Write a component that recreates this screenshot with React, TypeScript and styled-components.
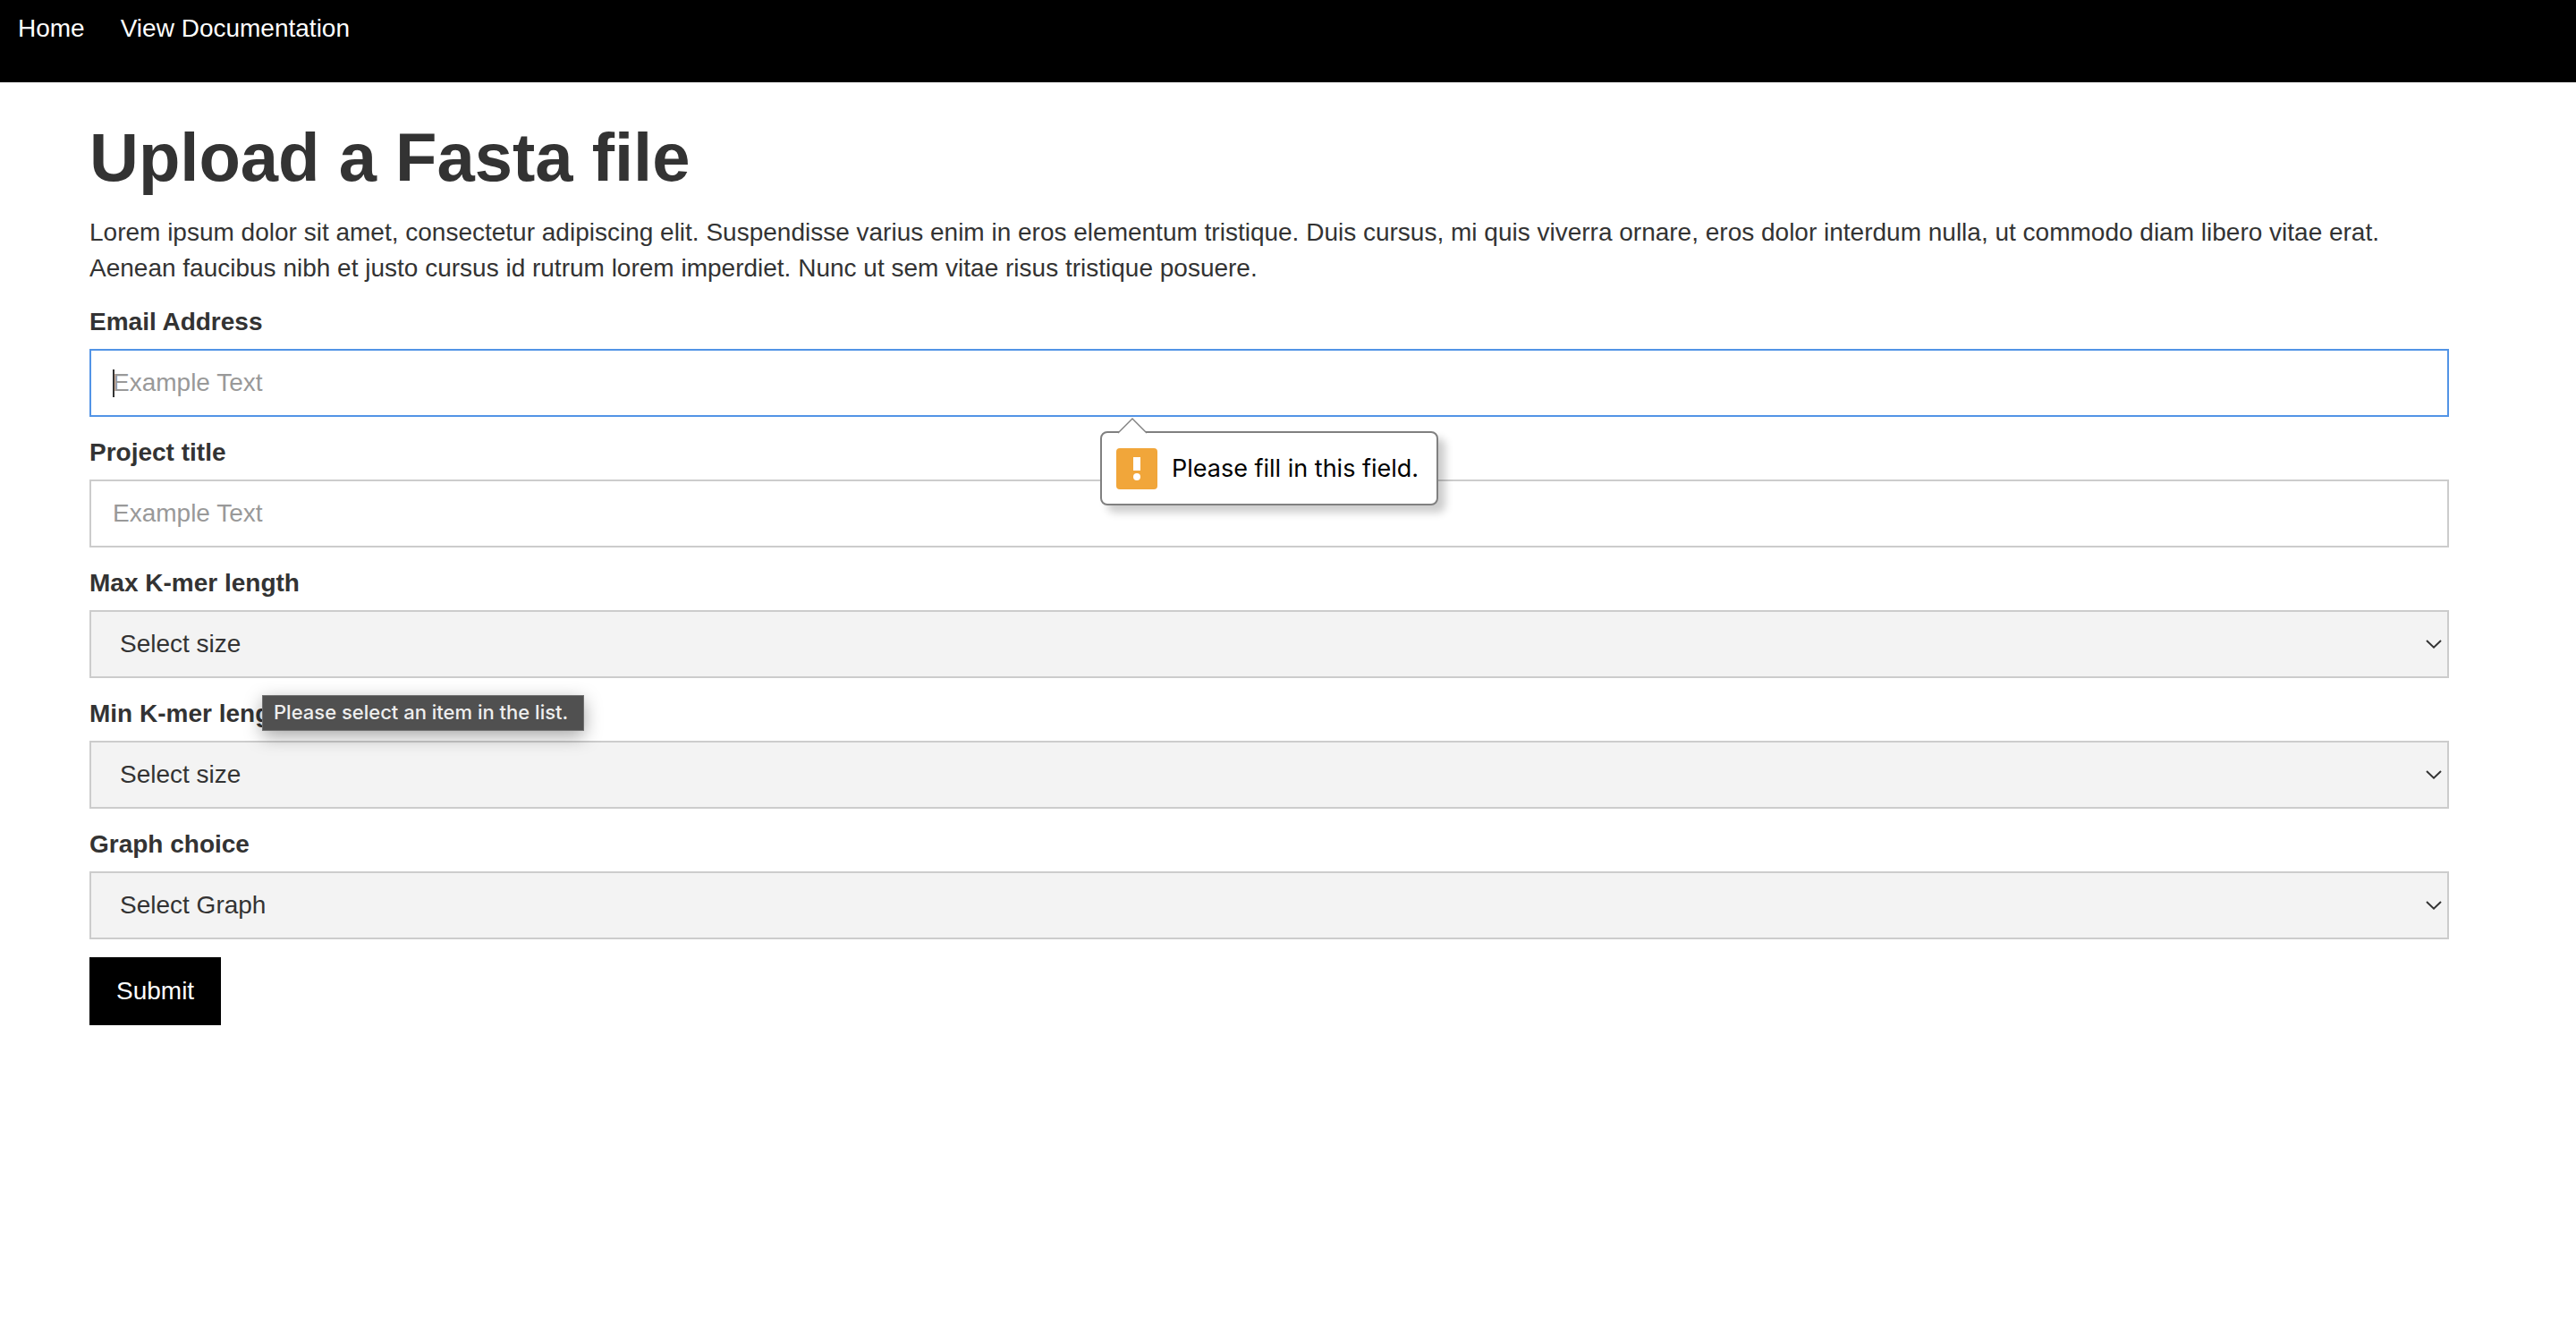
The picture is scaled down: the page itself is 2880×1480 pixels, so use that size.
import React from "react";
import styled, { createGlobalStyle, css } from "styled-components";

const GlobalStyle = createGlobalStyle`
  *, *::before, *::after { box-sizing: border-box; }
  body {
    margin: 0;
    background: #fff;
    color: #333;
    font-family: Arial, "Liberation Sans", sans-serif;
    font-size: 28px;
    line-height: 40px;
  }
`;

const NavBar = styled.nav`
  display: flex;
  gap: 40px;
  padding: 12px 20px 40px;
  background: #000;
`;

const NavLink = styled.a`
  color: #fff;
  text-decoration: none;
`;

const Page = styled.main`
  padding: 40px 142px 40px 100px;
`;

const Title = styled.h1`
  margin: 0 0 20px;
  font-size: 76px;
  line-height: 88px;
  font-weight: 700;
`;

const Intro = styled.p`
  margin: 0 0 20px;
`;

const Form = styled.form`
  display: flex;
  flex-direction: column;
  align-items: stretch;
  gap: 20px;
`;

const Field = styled.div`
  display: flex;
  flex-direction: column;
  gap: 10px;
`;

const Label = styled.label`
  font-weight: 700;
`;

const ControlBox = styled.div`
  position: relative;
  display: grid;
`;

const control = css`
  width: 100%;
  height: 76px;
  margin: 0;
  border: 2px solid #ccc;
  border-radius: 0;
  color: #333;
  font: inherit;
  outline: none;
`;

const TextInput = styled.input<{ $active?: boolean }>`
  ${control}
  padding: 16px 24px;
  background: #fff;
  border-color: ${(p) => (p.$active ? "#5294e6" : "#ccc")};

  &::placeholder {
    color: #999;
    opacity: 1;
  }
`;

const Select = styled.select`
  ${control}
  appearance: none;
  padding: 16px 60px 16px 32px;
  background: #f3f3f3;
`;

const Chevron = styled.svg`
  position: absolute;
  right: 8px;
  top: 50%;
  width: 18px;
  height: 10px;
  margin-top: -5px;
  pointer-events: none;
`;

const Caret = styled.span`
  position: absolute;
  left: 26px;
  top: 23px;
  width: 2px;
  height: 31px;
  background: #333;
`;

const Bubble = styled.div`
  position: absolute;
  z-index: 2;
  top: calc(100% + 16px);
  left: 50%;
  transform: translateX(-50%);
  display: flex;
  align-items: center;
  gap: 16px;
  width: 378px;
  height: 83px;
  padding: 0 16px;
  border: 2px solid #808080;
  border-radius: 8px;
  background: #fff;
  box-shadow: 8px 8px 10px rgba(0, 0, 0, 0.2);
  color: #000;
  font-family: Inter, sans-serif;
  font-size: 27px;
  white-space: nowrap;
`;

const BubbleArrow = styled.svg`
  position: absolute;
  left: 17px;
  top: -17px;
  width: 34px;
  height: 18px;
`;

const WarningIcon = styled.svg`
  flex: none;
  width: 46px;
  height: 46px;
`;

const Tooltip = styled.div`
  position: absolute;
  z-index: 1;
  top: calc(100% + 19px);
  left: 193px;
  width: 360px;
  padding: 0 12px 2px;
  border: 1px solid #707070;
  background: #505050;
  box-shadow: 0 6px 20px rgba(0, 0, 0, 0.35);
  color: #eee;
  font-family: Inter, sans-serif;
  font-size: 22px;
  font-weight: 500;
  line-height: 36px;
  white-space: nowrap;
`;

const SubmitButton = styled.button`
  align-self: flex-start;
  padding: 18px 30px;
  border: 0;
  background: #000;
  color: #fff;
  font: inherit;
  cursor: pointer;
`;

function RequiredBubble() {
  return (
    <Bubble role="alert">
      <BubbleArrow viewBox="0 0 34 18">
        <path d="M0 18 L1 17 L17 1 L33 17 L34 18 Z" fill="#fff" />
        <path d="M1 17 L17 1 L33 17" fill="none" stroke="#808080" strokeWidth="1.4" />
      </BubbleArrow>
      <WarningIcon viewBox="0 0 46 46" aria-hidden="true">
        <rect width="46" height="46" rx="4" fill="#f1a63a" />
        <rect x="19" y="10" width="8" height="15" fill="#fff" />
        <circle cx="23" cy="32" r="4" fill="#fff" />
      </WarningIcon>
      Please fill in this field.
    </Bubble>
  );
}

type TextFieldProps = { id: string; label: string; type: string; active?: boolean };

function TextField({ id, label, type, active }: TextFieldProps) {
  return (
    <Field>
      <Label htmlFor={id}>{label}</Label>
      <ControlBox>
        <TextInput id={id} type={type} placeholder="Example Text" required $active={active} />
        {active && <Caret />}
        {active && <RequiredBubble />}
      </ControlBox>
    </Field>
  );
}

type SelectFieldProps = { id: string; label: string; prompt: string; hint?: string };

function SelectField({ id, label, prompt, hint }: SelectFieldProps) {
  return (
    <Field>
      <Label htmlFor={id}>{label}</Label>
      <ControlBox>
        <Select id={id} required defaultValue="">
          <option value="">{prompt}</option>
        </Select>
        <Chevron viewBox="0 0 18 10" aria-hidden="true">
          <path d="M1 1 L9 8.6 L17 1" fill="none" stroke="#333" strokeWidth="2" />
        </Chevron>
        {hint && <Tooltip role="tooltip">{hint}</Tooltip>}
      </ControlBox>
    </Field>
  );
}

export default function App() {
  return (
    <>
      <GlobalStyle />
      <NavBar>
        <NavLink href="#home">Home</NavLink>
        <NavLink href="#docs">View Documentation</NavLink>
      </NavBar>
      <Page>
        <Title>Upload a Fasta file</Title>
        <Intro>
          Lorem ipsum dolor sit amet, consectetur adipiscing elit. Suspendisse varius enim in eros
          elementum tristique. Duis cursus, mi quis viverra ornare, eros dolor interdum nulla, ut
          commodo diam libero vitae erat. Aenean faucibus nibh et justo cursus id rutrum lorem
          imperdiet. Nunc ut sem vitae risus tristique posuere.
        </Intro>
        <Form>
          <TextField id="email" label="Email Address" type="email" active />
          <TextField id="title" label="Project title" type="text" />
          <SelectField
            id="max-kmer"
            label="Max K-mer length"
            prompt="Select size"
            hint="Please select an item in the list."
          />
          <SelectField id="min-kmer" label="Min K-mer length" prompt="Select size" />
          <SelectField id="graph" label="Graph choice" prompt="Select Graph" />
          <SubmitButton type="submit">Submit</SubmitButton>
        </Form>
      </Page>
    </>
  );
}
